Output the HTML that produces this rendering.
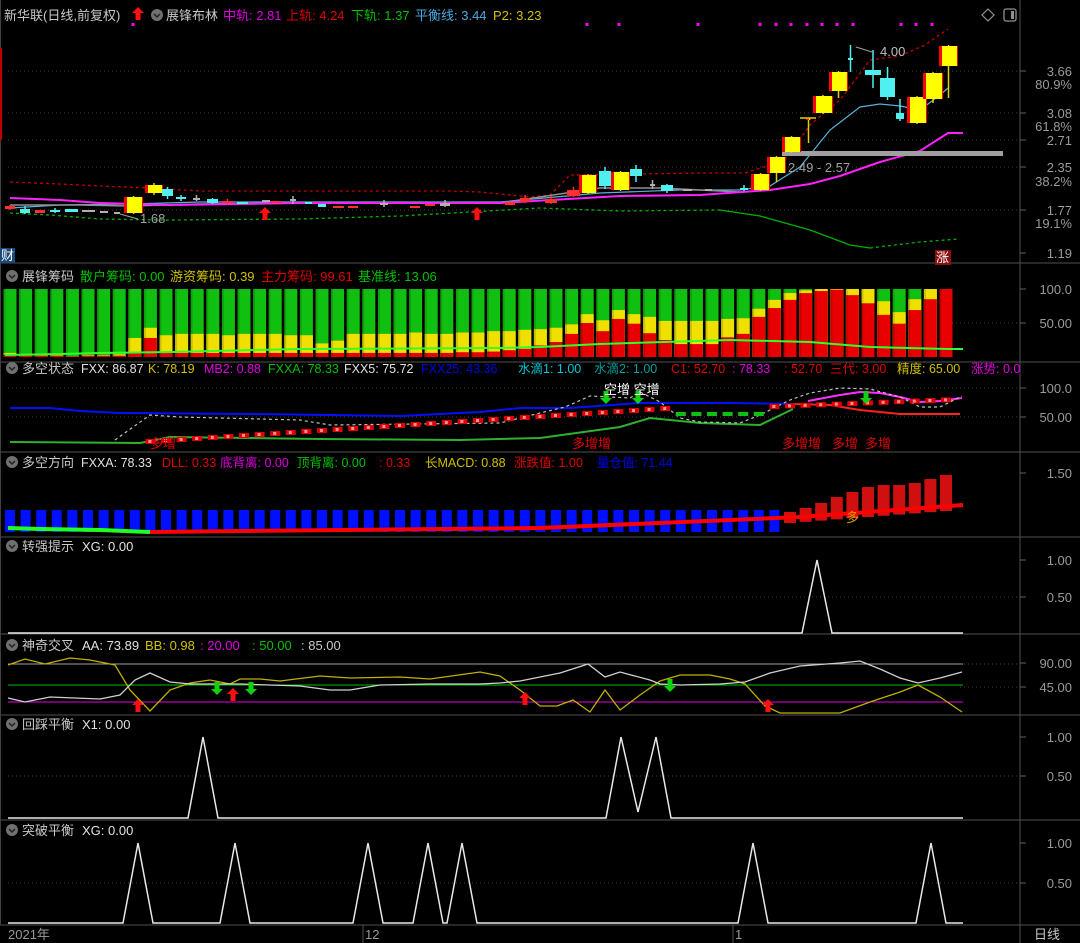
<!DOCTYPE html>
<html><head><meta charset="utf-8">
<style>
html,body{margin:0;padding:0;background:#000;width:1080px;height:943px;overflow:hidden}
svg{display:block}
text{font-family:"Liberation Sans","Noto Sans CJK SC",sans-serif;font-size:13px}
.ax{fill:#9a9a9a;font-size:13px;text-anchor:end}
.v{font-size:12.5px}
</style></head><body>
<svg id="s" width="1080" height="943" viewBox="0 0 1080 943" xmlns="http://www.w3.org/2000/svg">
<rect width="1080" height="943" fill="#000"/>
<g id="g"></g>
<g>
<text x="4" y="20" fill="#c8c8c8" font-size="14">新华联(日线,前复权)</text>
<text x="223" y="20" fill="#e000e0">中轨: 2.81</text>
<text x="286" y="20" fill="#e00000">上轨: 4.24</text>
<text x="351" y="20" fill="#00c000">下轨: 1.37</text>
<text x="415" y="20" fill="#4aa8e0">平衡线: 3.44</text>
<text x="493" y="20" fill="#d0c000">P2: 3.23</text>
<text x="166" y="20" fill="#c8c8c8" font-size="14">展锋布林</text>

<text x="22" y="281" fill="#c8c8c8" font-size="14">展锋筹码</text>
<text x="80" y="281" fill="#00c000">散户筹码: 0.00</text>
<text x="170" y="281" fill="#d0c000">游资筹码: 0.39</text>
<text x="261" y="281" fill="#e00000">主力筹码: 99.61</text>
<text x="358" y="281" fill="#00c000">基准线: 13.06</text>

<g class="v">
<text x="22" y="373" fill="#c8c8c8" font-size="14">多空状态</text>
<text class="v" x="81" y="373" fill="#e0e0e0">FXX: 86.87</text>
<text class="v" x="148" y="373" fill="#d0c000">K: 78.19</text>
<text class="v" x="204" y="373" fill="#e000e0">MB2: 0.88</text>
<text class="v" x="268" y="373" fill="#00c000">FXXA: 78.33</text>
<text class="v" x="344" y="373" fill="#e0e0e0">FXX5: 75.72</text>
<text class="v" x="421" y="373" fill="#0000e8">FXX25: 43.36</text>
<text class="v" x="518" y="373" fill="#00c8d8">水滴1: 1.00</text>
<text class="v" x="594" y="373" fill="#00a0a0">水滴2: 1.00</text>
<text class="v" x="671" y="373" fill="#e00000">C1: 52.70</text>
<text class="v" x="732" y="373" fill="#e000e0">: 78.33</text>
<text class="v" x="784" y="373" fill="#e00000">: 52.70</text>
<text class="v" x="830" y="373" fill="#e00000">三代: 3.00</text>
<text class="v" x="897" y="373" fill="#d0c000">精度: 65.00</text>
<text class="v" x="971" y="373" fill="#e000e0">涨势: 0.0</text>

<text x="22" y="467" fill="#c8c8c8" font-size="14">多空方向</text>
<text class="v" x="81" y="467" fill="#e0e0e0">FXXA: 78.33</text>
<text class="v" x="162" y="467" fill="#e00000">DLL: 0.33</text>
<text class="v" x="220" y="467" fill="#e000e0">底背离: 0.00</text>
<text class="v" x="297" y="467" fill="#00c000">顶背离: 0.00</text>
<text class="v" x="379" y="467" fill="#e00000">: 0.33</text>
<text class="v" x="425" y="467" fill="#d0c000">长MACD: 0.88</text>
<text class="v" x="514" y="467" fill="#e00000">涨跌值: 1.00</text>
<text class="v" x="597" y="467" fill="#0000e8">量仓值: 71.44</text>
</g>

<text x="22" y="551" fill="#c8c8c8" font-size="14">转强提示</text>
<text x="82" y="551" fill="#e0e0e0">XG: 0.00</text>
<text x="22" y="650" fill="#c8c8c8" font-size="14">神奇交叉</text>
<text x="82" y="650" fill="#e0e0e0">AA: 73.89</text>
<text x="145" y="650" fill="#d0c000">BB: 0.98</text>
<text x="200" y="650" fill="#e000e0">: 20.00</text>
<text x="252" y="650" fill="#00c000">: 50.00</text>
<text x="301" y="650" fill="#c8c8c8">: 85.00</text>
<text x="22" y="729" fill="#c8c8c8" font-size="14">回踩平衡</text>
<text x="82" y="729" fill="#e0e0e0">X1: 0.00</text>
<text x="22" y="835" fill="#c8c8c8" font-size="14">突破平衡</text>
<text x="82" y="835" fill="#e0e0e0">XG: 0.00</text>

<text class="ax" x="1072" y="76">3.66</text>
<text class="ax" x="1072" y="89">80.9%</text>
<text class="ax" x="1072" y="118">3.08</text>
<text class="ax" x="1072" y="131">61.8%</text>
<text class="ax" x="1072" y="145">2.71</text>
<text class="ax" x="1072" y="172">2.35</text>
<text class="ax" x="1072" y="186">38.2%</text>
<text class="ax" x="1072" y="215">1.77</text>
<text class="ax" x="1072" y="228">19.1%</text>
<text class="ax" x="1072" y="258">1.19</text>
<text class="ax" x="1072" y="294">100.0</text>
<text class="ax" x="1072" y="328">50.00</text>
<text class="ax" x="1072" y="393">100.0</text>
<text class="ax" x="1072" y="422">50.00</text>
<text class="ax" x="1072" y="478">1.50</text>
<text class="ax" x="1072" y="565">1.00</text>
<text class="ax" x="1072" y="602">0.50</text>
<text class="ax" x="1072" y="668">90.00</text>
<text class="ax" x="1072" y="692">45.00</text>
<text class="ax" x="1072" y="742">1.00</text>
<text class="ax" x="1072" y="781">0.50</text>
<text class="ax" x="1072" y="848">1.00</text>
<text class="ax" x="1072" y="888">0.50</text>
<text x="8" y="939" fill="#9a9a9a" font-size="12">2021年</text>
<text x="365" y="939" fill="#9a9a9a" font-size="12">12</text>
<text x="735" y="939" fill="#9a9a9a" font-size="12">1</text>
<text x="1034" y="939" fill="#c8c8c8" font-size="13">日线</text>

<text x="140" y="223" fill="#a0a0a0" font-size="13">1.68</text>
<text x="880" y="56" fill="#c0c0c0" font-size="13">4.00</text>
<text x="788" y="172" fill="#a0a0a0" font-size="13">2.49 - 2.57</text>
<rect x="0" y="248" width="15" height="15" fill="#1b4a7a"/><text x="1" y="260" fill="#fff" font-size="12">财</text>
<rect x="935" y="250" width="16" height="15" fill="#8a1010"/><text x="936" y="262" fill="#fff" font-size="12">涨</text>
<text x="604" y="394" fill="#ffffff" font-size="14">空增 空增</text>
<text x="150" y="448" fill="#e00000" font-size="14">多增</text>
<text x="572" y="448" fill="#e00000" font-size="14">多增增</text>
<text x="782" y="448" fill="#e00000" font-size="14">多增增</text>
<text x="832" y="448" fill="#e00000" font-size="14">多增</text>
<text x="865" y="448" fill="#e00000" font-size="14">多增</text>
<text x="846" y="522" fill="#d0a000" font-size="13">多</text>
</g>
</svg>
<script>
var g=document.getElementById('g'),NS='http://www.w3.org/2000/svg';
function el(t,a){var e=document.createElementNS(NS,t);for(var k in a)e.setAttribute(k,a[k]);g.appendChild(e);return e;}
function R(x,y,w,h,f){el('rect',{x:x,y:y,width:w,height:h,fill:f});}
function L(pts,c,w,d){el('polyline',{points:pts.map(function(p){return p.join(',')}).join(' '),fill:'none',stroke:c,'stroke-width':w||1,'stroke-dasharray':d||''});}
function H(y,c,dash,x1,x2){el('line',{x1:x1||0,x2:x2||1020,y1:y,y2:y,stroke:c,'stroke-width':1,'stroke-dasharray':dash||''});}
function cx(i){return 10+15.6*i;}
[263,362,452,537,634,715,820,925].forEach(function(y){H(y,'#505050','',0,1080);});
el('line',{x1:1020,x2:1020,y1:0,y2:943,stroke:'#505050'});
el('line',{x1:0.5,x2:0.5,y1:0,y2:925,stroke:'#404040'});
R(0,48,2,92,'#c00000');
[71,113,140,167,210].forEach(function(y){H(y,'#404040','1,3',8,1020);});
[323].forEach(function(y){H(y,'#404040','1,3',900,1020);});
[388,417].forEach(function(y){H(y,'#404040','1,3',8,1020);});
[597,776,883].forEach(function(y){H(y,'#404040','1,3',8,1020);});
[664,687].forEach(function(y){H(y,'#404040','1,3',960,1020);});
[71,113,140,167,210,253,289,323,388,417,473,560,597,663,687,737,776,843,883].forEach(function(y){el('line',{x1:1020,x2:1026,y1:y,y2:y,stroke:'#606060'});});
[363,733].forEach(function(x){el('line',{x1:x,x2:x,y1:925,y2:943,stroke:'#505050'});});
[[157,15],[12,276],[12,368],[12,462],[12,546],[12,645],[12,724],[12,830]].forEach(function(p){
 el('circle',{cx:p[0],cy:p[1],r:6,fill:'#707070'});
 el('polyline',{points:(p[0]-3)+','+(p[1]-1)+' '+p[0]+','+(p[1]+2)+' '+(p[0]+3)+','+(p[1]-1),fill:'none',stroke:'#222','stroke-width':1.5});
});
el('path',{d:'M988 9 L994 15 L988 21 L982 15Z',fill:'none',stroke:'#909090','stroke-width':1.2});
el('rect',{x:1004,y:9,width:12,height:12,rx:2,fill:'none',stroke:'#909090','stroke-width':1.3});R(1011,11,3,8,'#909090');
function upArrow(x,y,c){el('path',{d:'M'+x+' '+y+' l6 6 h-3.5 v7 h-5 v-7 h-3.5z',fill:c});}
function dnArrow(x,y,c){el('path',{d:'M'+x+' '+y+' l6 -6 h-3.5 v-7 h-5 v7 h-3.5z',fill:c});}
upArrow(138,7,'#ff1010');
[133,587,619,698,760,776,791,807,822,837,853,901,916,932].forEach(function(x){R(x-1.5,23,3,3,'#ff00ff');});
L([[10,182],[60,184],[100,186],[150,188],[200,191],[450,191],[480,192],[530,197],[550,195],[570,175],[700,173],[745,173],[785,160],[810,125],[840,100],[870,60],[900,56],[925,45],[948,29]],'#c00000',1.3,'3,3');
L([[10,208],[60,205],[130,204],[200,202],[300,202],[500,202],[600,193],[680,190],[740,190],[770,186],[800,167],[830,130],[860,107],[880,104],[900,106],[920,110],[940,95],[948,88]],'#5ab0d8',1.2);
L([[10,205],[80,205],[130,206],[200,204],[300,203],[500,203],[600,188],[660,188],[700,190],[740,192]],'#909090',1.5);
L([[10,198],[60,200],[100,203],[170,205],[300,203],[500,203],[620,196],[700,195],[770,190],[810,184],[840,176],[880,162],[920,151],[948,133],[963,133]],'#ff20ff',2);
L([[10,213],[50,215],[100,219],[165,220],[300,219],[400,216],[470,212],[540,208],[620,211],[720,210]],'#00b000',1.3,'3,3');
L([[720,210],[760,216],[810,230],[850,245],[870,248]],'#00b000',1.3);
L([[870,248],[920,242],[958,239]],'#00b000',1.3,'3,3');
R(782,151,221,5,'#a0a0a0');
L([[856,47],[872,52]],'#a0a0a0',1);L([[120,214],[138,219]],'#a0a0a0',1);
upArrow(265,207,'#ff1010');upArrow(477,207,'#ff1010');
var C=[[5,15,206,209,205,210,'r'],[20,30,209,213,206,214,'c'],[35,45,210,213,0,0,'r'],[50,60,210,212,208,213,'c'],[65,78,209,212,0,0,'c'],[82,95,210,212,0,0,'g'],[100,108,211,212,0,0,'g'],[114,120,212,214,0,0,'g'],
[124,143,197,213,196,214,'y'],[145,163,185,193,183,195,'y'],[162,173,189,196,187,199,'c'],[176,186,197,199,195,201,'c'],[193,200,198,200,195,201,'g'],[207,218,199,203,198,204,'c'],[222,233,201,203,199,204,'r'],[237,248,202,204,0,0,'c'],[262,270,200,202,0,0,'g'],[270,282,201,203,0,0,'r'],[290,296,199,201,196,204,'g'],[305,312,202,204,0,0,'c'],[318,326,204,207,0,0,'c'],[333,344,206,208,0,0,'r'],[348,358,206,208,0,0,'r'],[380,388,203,205,200,207,'g'],[410,420,206,208,0,0,'r'],[425,435,204,206,0,0,'r'],[440,450,203,206,200,207,'g'],[505,515,202,205,0,0,'r'],
[520,530,198,202,195,203,'r'],[545,557,199,203,196,204,'r'],[567,580,190,196,187,197,'r'],[579,597,175,193,174,194,'y'],[599,611,171,186,167,189,'c'],[611,630,172,190,171,191,'y'],[630,642,169,176,165,182,'c'],[650,655,184,186,180,189,'g'],[661,673,185,191,184,193,'c'],[683,692,189,190,0,0,'g'],[705,712,189,191,0,0,'g'],[740,748,188,190,185,191,'c'],
[751,770,174,190,173,191,'y'],[767,786,157,173,156,182,'y'],[782,801,137,152,136,153,'y'],[806,811,118,120,118,143,'y'],[813,833,96,113,95,114,'y'],[829,848,72,91,71,98,'y'],[848,853,58,60,45,72,'c'],[865,881,70,75,50,88,'c'],[880,895,78,97,67,100,'c'],[896,904,113,119,99,121,'c'],[907,927,97,123,96,124,'y'],[923,943,73,99,72,103,'y'],[939,958,46,66,45,98,'y']];
C.forEach(function(c){var m=(c[0]+c[1])/2,col={r:'#ff3030',c:'#50f0f0',g:'#b0b0b0',y:'#ffff00'}[c[6]];
 if(c[4])el('line',{x1:m,x2:m,y1:c[4],y2:c[5],stroke:c[6]=='y'?'#e0d000':col,'stroke-width':1.5});
 if(c[6]=='y'){R(c[0],c[2],c[1]-c[0],c[3]-c[2],'#ff0000');R(c[0]+3,c[2],c[1]-c[0]-4,c[3]-c[2],'#ffff00');}
 else R(c[0],c[2],c[1]-c[0],Math.max(2,c[3]-c[2]),col);
});
L([[800,118],[816,118]],'#e0d000',1.5);
var red=[3,2,2,2,1,2,2,2,6,28,6,6,6,6,6,6,6,6,6,6,6,6,6,6,6,6,6,6,6,7,7,8,10,12,17,22,34,50,38,56,49,35,25,19,19,19,29,34,59,72,84,94,97,99,91,79,62,49,69,85,100];
var yel=[6,3,4,4,1,3,3,4,28,43,32,34,34,34,32,34,34,34,32,32,20,24,34,34,34,34,36,34,34,36,36,38,38,40,41,43,48,63,54,69,63,59,53,53,53,53,56,57,71,84,94,98,100,100,100,100,82,66,85,100,100];
function cy(v){return 357-v*0.68;}
for(var i=0;i<61;i++){var x=cx(i)-6.5;R(x,289,13,68,'#10c010');R(x,cy(yel[i]),13,357-cy(yel[i]),'#f0e000');R(x,cy(red[i]),13,357-cy(red[i]),'#e80000');
 R(x,289,2,68,'rgba(0,0,0,0.15)');}
L([[5,355],[60,354],[100,353],[170,352],[300,349],[500,348],[540,347],[600,344],[730,340],[810,342],[870,347],[948,349],[963,349]],'#30ff30',2);
L([[10,408],[50,408],[80,411],[120,413],[250,414],[400,416],[480,412],[520,408],[570,408],[640,403],[730,403],[793,404]],'#0010ff',2);
L([[10,442],[140,443],[170,437],[320,439],[460,440],[540,438],[620,427],[650,418],[700,423],[760,425],[793,409]],'#30b030',2);
L([[793,404],[830,405],[860,410],[900,414],[960,414]],'#ff2020',2);
L([[808,401],[840,395],[860,392],[880,393],[900,397],[920,402],[940,401],[962,398]],'#ff30ff',2);
L([[115,440],[150,415],[180,417],[300,420],[330,425],[500,423],[520,418],[540,413],[565,407],[590,396],[630,398],[640,392],[660,402],[680,418],[700,422],[740,423],[760,415],[790,400],[810,393],[840,388],[870,389],[900,397],[920,407],[940,407],[950,402],[962,396]],'#c0c0c0',1.2,'3,3');
for(var i=9;i<61;i++){var x=cx(i);var t=(i-9)/33;var y=i<=42?441-t*33:(i<=48?413:406-(i-49)*0.6);
 if(i>=43&&i<=48){R(x-5,y-1,10,4,'#10c010');}else{R(x-5,y-2,10,5,'#e00000');R(x-2,y-1,3,3,'#ff9090');}}
dnArrow(606,404,'#10d010');dnArrow(638,404,'#10d010');dnArrow(866,404,'#10d010');
for(var i=0;i<50;i++){R(cx(i)-5,510,10,22,'#0010ff');}
var rt=[512,508,503,497,492,487,485,485,483,479,475];
for(var i=50;i<61;i++){var bt=rt[i-50];var yb=517-(i-50)*1.2;R(cx(i)-6,bt,12,yb-bt+6,'#d01010');}
L([[150,532],[540,528],[800,517],[963,505]],'#ff0000',4);
L([[8,528],[40,529],[100,530],[150,532]],'#20ff20',4);
L([[8,633],[802,633],[817,560],[832,633],[963,633]],'#e8e8e8',1.5);
H(664,'#a0a0a0','',8,963);H(685,'#00c000','',8,963);H(702,'#e000e0','',8,963);
L([[8,665],[25,659],[45,664],[70,658],[90,660],[115,665],[130,690],[150,711],[170,690],[190,683],[210,680],[230,684],[240,679],[260,679],[280,681],[320,676],[350,678],[400,677],[430,679],[480,672],[500,676],[520,690],[540,706],[557,706],[573,700],[590,712],[605,690],[620,710],[640,695],[660,681],[680,675],[710,675],[730,679],[745,684],[765,706],[780,713],[840,713],[870,702],[900,692],[918,685],[940,697],[962,712]],'#c0b000',1.3);
L([[8,698],[25,702],[50,697],[100,699],[120,695],[135,680],[150,673],[170,682],[190,684],[240,684],[300,686],[330,690],[350,690],[380,685],[430,684],[480,684],[500,683],[520,681],[560,673],[588,664],[605,677],[620,672],[650,680],[660,684],[680,685],[720,684],[745,682],[770,673],[800,666],[840,663],[860,661],[880,669],[900,678],[918,683],[940,678],[962,672]],'#d0d0d0',1.3);
upArrow(138,699,'#ff1010');upArrow(233,688,'#ff1010');upArrow(525,692,'#ff1010');upArrow(768,699,'#ff1010');
dnArrow(217,695,'#10d010');dnArrow(251,695,'#10d010');dnArrow(670,692,'#10d010');
L([[8,818],[188,818],[203,737],[218,818],[606,818],[621,737],[638,812],[656,737],[671,818],[963,818]],'#e8e8e8',1.5);
var pk=[138,235,368,428,462,753,931],pts=[[8,923]];
pk.forEach(function(x){pts.push([x-15,923],[x,843],[x+15,923]);});pts.push([963,923]);
L(pts,'#e8e8e8',1.5);
</script>
</body></html>
